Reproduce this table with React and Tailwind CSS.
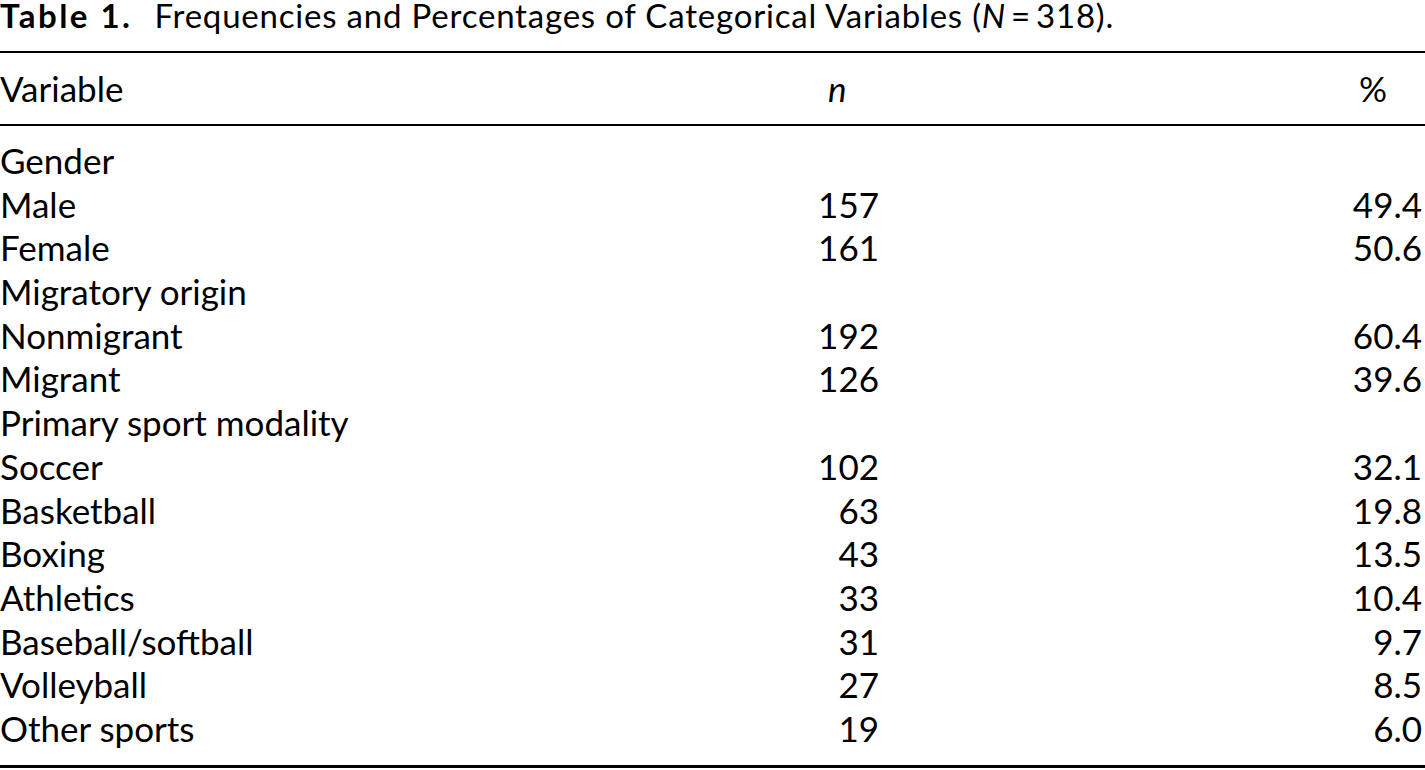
export default function App() {
  const rows = [
    { label: "Gender", group: true },
    { label: "Male", n: "157", p: "49.4" },
    { label: "Female", n: "161", p: "50.6" },
    { label: "Migratory origin", group: true },
    { label: "Nonmigrant", n: "192", p: "60.4" },
    { label: "Migrant", n: "126", p: "39.6" },
    { label: "Primary sport modality", group: true },
    { label: "Soccer", n: "102", p: "32.1" },
    { label: "Basketball", n: "63", p: "19.8" },
    { label: "Boxing", n: "43", p: "13.5" },
    { label: "Athletics", n: "33", p: "10.4" },
    { label: "Baseball/softball", n: "31", p: "9.7" },
    { label: "Volleyball", n: "27", p: "8.5" },
    { label: "Other sports", n: "19", p: "6.0" },
  ];
  return (
    <div
      className="w-[1425px] h-[770px] bg-white text-black overflow-hidden"
      style={{ fontFamily: "Lato, 'Open Sans', sans-serif" }}
    >
      <div className="h-[51px] pt-[2px] text-[33px] leading-[26px] whitespace-nowrap">
        <span className="font-bold tracking-[2.5px]">Table 1.</span>
        <span className="ml-[22px] tracking-[0.8px]">
          Frequencies and Percentages of Categorical Variables (<span className="italic">N</span>
          <span className="mx-[5px]">=</span>318).
        </span>
      </div>
      <div className="border-t-[2.5px] border-black" />
      <div className="flex items-center h-[71px] text-[35px]">
        <div className="w-[780px]">Variable</div>
        <div className="w-[100px] pl-[48px] italic">n</div>
        <div className="flex-1 text-right pr-[38px]">%</div>
      </div>
      <div className="border-t-[2.5px] border-black" />
      <div className="pt-[13px] pb-[14px]">
        {rows.map((r, i) => (
          <div key={i} className="flex items-center h-[43.7px] text-[35px] leading-[43.7px] whitespace-nowrap">
            <div className="w-[780px]">{r.label}</div>
            <div className="w-[100px] text-right pr-[1px]">{r.n || ""}</div>
            <div className="flex-1 text-right pr-[3px]">{r.p || ""}</div>
          </div>
        ))}
      </div>
      <div className="border-t-[3px] border-black" />
    </div>
  );
}
